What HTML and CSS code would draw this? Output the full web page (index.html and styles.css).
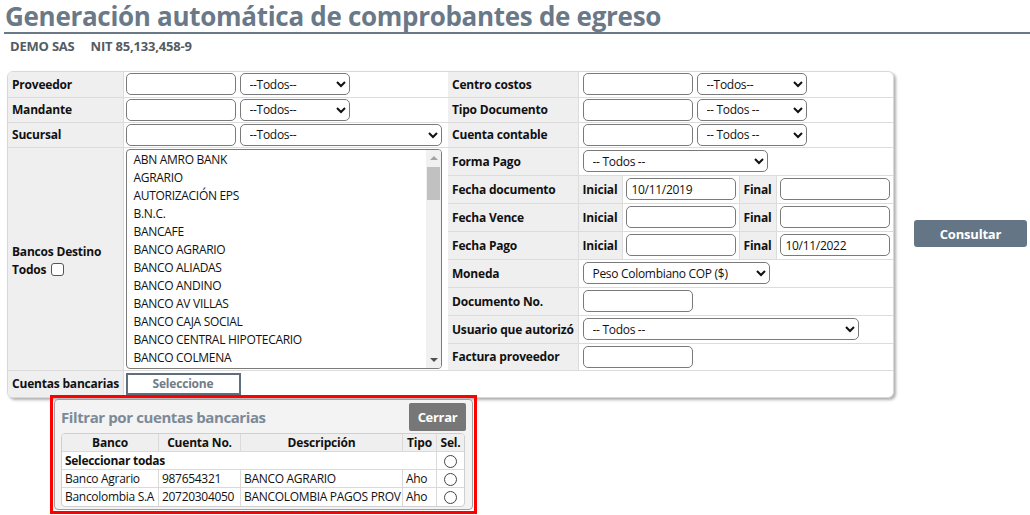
FILE: index.html
```html
<!DOCTYPE html>
<html lang="es">
<head>
<meta charset="utf-8">
<title>Generación automática de comprobantes de egreso</title>
<link rel="stylesheet" href="styles.css">
</head>
<body>
<h1 class="title">Generación automática de comprobantes de egreso</h1>
<div class="subtitle"><span>DEMO SAS</span><span class="nit">NIT 85,133,458-9</span></div>

<div class="main">
  <div class="panel">
    <table class="form left">
      <colgroup><col class="lc1"><col class="lc2"></colgroup>
      <tr class="r25">
        <th>Proveedor</th>
        <td><input class="txt" type="text"><select class="sel"><option>--Todos--</option></select></td>
      </tr>
      <tr class="r25">
        <th>Mandante</th>
        <td><input class="txt" type="text"><select class="sel"><option>--Todos--</option></select></td>
      </tr>
      <tr class="r25">
        <th>Sucursal</th>
        <td><input class="txt" type="text"><select class="sel wide"><option>--Todos--</option></select></td>
      </tr>
      <tr class="rbank">
        <th class="bankhead"><div>Bancos Destino</div><div class="todos">Todos <span class="chk"></span></div></th>
        <td>
          <div class="listbox">
            <div class="items">
              <div>ABN AMRO BANK</div>
              <div>AGRARIO</div>
              <div>AUTORIZACIÓN EPS</div>
              <div>B.N.C.</div>
              <div>BANCAFE</div>
              <div>BANCO AGRARIO</div>
              <div>BANCO ALIADAS</div>
              <div>BANCO ANDINO</div>
              <div>BANCO AV VILLAS</div>
              <div>BANCO CAJA SOCIAL</div>
              <div>BANCO CENTRAL HIPOTECARIO</div>
              <div>BANCO COLMENA</div>
            </div>
            <div class="sbar">
              <span class="arr up"></span>
              <span class="thumb"></span>
              <span class="arr down"></span>
            </div>
          </div>
        </td>
      </tr>
      <tr class="r27 last">
        <th>Cuentas bancarias</th>
        <td><button class="selbtn">Seleccione</button></td>
      </tr>
    </table>

    <table class="form right">
      <colgroup><col class="rc1"><col class="rc2"><col class="rc3"><col class="rc4"><col class="rc5"></colgroup>
      <tr class="r25">
        <th>Centro costos</th>
        <td colspan="4"><input class="txt" type="text"><select class="sel"><option>--Todos--</option></select></td>
      </tr>
      <tr class="r25">
        <th>Tipo Documento</th>
        <td colspan="4"><input class="txt" type="text"><select class="sel"><option>-- Todos --</option></select></td>
      </tr>
      <tr class="r25">
        <th>Cuenta contable</th>
        <td colspan="4"><input class="txt" type="text"><select class="sel"><option>-- Todos --</option></select></td>
      </tr>
      <tr class="r28">
        <th>Forma Pago</th>
        <td colspan="4"><select class="sel pago"><option>-- Todos --</option></select></td>
      </tr>
      <tr class="r28">
        <th>Fecha documento</th>
        <th class="sub">Inicial</th>
        <td class="dcell"><input class="txt" type="text" value="10/11/2019"></td>
        <th class="sub">Final</th>
        <td class="dcell"><input class="txt" type="text"></td>
      </tr>
      <tr class="r28">
        <th>Fecha Vence</th>
        <th class="sub">Inicial</th>
        <td class="dcell"><input class="txt" type="text"></td>
        <th class="sub">Final</th>
        <td class="dcell"><input class="txt" type="text"></td>
      </tr>
      <tr class="r28">
        <th>Fecha Pago</th>
        <th class="sub">Inicial</th>
        <td class="dcell"><input class="txt" type="text"></td>
        <th class="sub">Final</th>
        <td class="dcell"><input class="txt" type="text" value="10/11/2022"></td>
      </tr>
      <tr class="r28">
        <th>Moneda</th>
        <td colspan="4"><select class="sel moneda"><option>Peso Colombiano COP ($)</option></select></td>
      </tr>
      <tr class="r28">
        <th>Documento No.</th>
        <td colspan="4"><input class="txt" type="text"></td>
      </tr>
      <tr class="r28">
        <th>Usuario que autorizó</th>
        <td colspan="4"><select class="sel usuario"><option>-- Todos --</option></select></td>
      </tr>
      <tr class="r27">
        <th>Factura proveedor</th>
        <td colspan="4"><input class="txt" type="text"></td>
      </tr>
    </table>
  </div>
  <button class="consultar">Consultar</button>
</div>

<div class="popup">
  <div class="popin">
    <div class="pophead">
      <span class="poptitle">Filtrar por cuentas bancarias</span>
      <button class="cerrar">Cerrar</button>
    </div>
    <table class="cuentas">
      <tr>
        <th class="c1">Banco</th>
        <th class="c2">Cuenta No.</th>
        <th class="c3">Descripción</th>
        <th class="c4">Tipo</th>
        <th class="c5">Sel.</th>
      </tr>
      <tr>
        <td colspan="4" class="todas">Seleccionar todas</td>
        <td class="rc"><span class="radio"></span></td>
      </tr>
      <tr>
        <td>Banco Agrario</td>
        <td>987654321</td>
        <td>BANCO AGRARIO</td>
        <td>Aho</td>
        <td class="rc"><span class="radio"></span></td>
      </tr>
      <tr>
        <td>Bancolombia S.A</td>
        <td>20720304050</td>
        <td>BANCOLOMBIA PAGOS PROV</td>
        <td>Aho</td>
        <td class="rc"><span class="radio"></span></td>
      </tr>
    </table>
  </div>
</div>
</body>
</html>
```

FILE: styles.css
```css
* { box-sizing: border-box; }

body {
  margin: 0;
  font-family: "Open Sans", "Liberation Sans", sans-serif;
  font-size: 12px;
  letter-spacing: -0.3px;
  color: #111;
  background: #fff;
}

.title {
  margin: 0 0 0 4px;
  padding: 0 0 0 1px;
  font-size: 26px;
  font-weight: 700;
  line-height: 32px;
  color: #6a7988;
  border-bottom: 2px solid #6a7988;
  letter-spacing: -0.3px;
}

.subtitle {
  padding: 3px 0 0 10px;
  height: 37px;
  font-size: 13px;
  font-weight: 700;
  color: #555b62;
  letter-spacing: -0.2px;
}

.subtitle .nit { margin-left: 16px; }

.main {
  display: flex;
  align-items: center;
  padding-left: 7px;
}

.panel {
  display: flex;
  align-items: flex-start;
  width: 887px;
  border: 1px solid #d8d8d8;
  border-radius: 6px;
  box-shadow: 2px 2px 3px #b0b0b0;
  background: #fff;
  overflow: hidden;
}

.form {
  border-collapse: collapse;
  table-layout: fixed;
}

.form th, .form td {
  padding: 0 0 0 2px;
  border-bottom: 1px solid #dcdcdc;
  vertical-align: middle;
  white-space: nowrap;
}

.form th {
  background: #efefef;
  text-align: left;
  font-weight: 700;
  padding-left: 4px;
  border-right: 1px solid #dcdcdc;
  letter-spacing: -0.2px;
}

.form .last th, .form .last td { border-bottom: none; }

.left { width: 440px; }
.lc1 { width: 115px; }
.lc2 { width: 325px; }

.right { width: 445px; }
.rc1 { width: 130px; }
.rc2 { width: 44px; }
.rc3 { width: 117px; }
.rc4 { width: 37px; }
.rc5 { width: 117px; }

.right td { padding-left: 4px; }

.r25 { height: 25px; }
.r27 { height: 27px; }
.r28 { height: 28px; }
.rbank { height: 223px; }

.bankhead div { line-height: 18px; }
.bankhead { padding-top: 4px !important; }
.todos { display: flex; align-items: center; gap: 5px; }
.chk {
  display: inline-block;
  width: 13px;
  height: 13px;
  border: 1px solid #555;
  border-radius: 3px;
  background: #fff;
}

.txt, .sel {
  height: 22px;
  border: 1px solid #7a7a7a;
  border-radius: 5px;
  font-family: inherit;
  font-size: 12px;
  letter-spacing: -0.3px;
  color: #111;
  background: #fff;
  vertical-align: middle;
  margin: 0;
}

.txt { width: 110px; padding: 0 5px; }
.sel { width: 110px; margin-left: 4px; padding: 0 2px 0 5px; }
.sel.wide { width: 202px; }
.sel.pago { width: 185px; margin-left: 0; }
.sel.moneda { width: 187px; margin-left: 0; }
.sel.usuario { width: 276px; margin-left: 0; }

.form th.sub {
  padding-left: 4px;
  border-left: 1px solid #dcdcdc;
}
.form td.dcell { padding-left: 3px; padding-right: 0; }

.listbox {
  display: flex;
  width: 316px;
  height: 220px;
  border: 1px solid #7a7a7a;
  border-radius: 4px;
  overflow: hidden;
  background: #fff;
}

.items {
  flex: 1;
  padding: 1px 0 0 7px;
}

.items div {
  height: 18px;
  line-height: 18px;
  color: #111;
}

.sbar {
  width: 15px;
  background: #f1f1f1;
  display: flex;
  flex-direction: column;
  align-items: center;
}

.arr {
  width: 15px;
  height: 17px;
  position: relative;
}
.arr::after {
  content: "";
  position: absolute;
  left: 4px;
  border-left: 4px solid transparent;
  border-right: 4px solid transparent;
}
.arr.up::after { top: 6px; border-bottom: 4px solid #a3a3a3; }
.arr.down::after { top: 7px; border-top: 4px solid #505050; }

.thumb {
  width: 13px;
  height: 33px;
  background: #c1c1c1;
}
.sbar .down { margin-top: auto; }

.selbtn {
  width: 115px;
  height: 22px;
  margin: 0;
  border: 2px solid #5f6f7e;
  background: #fff;
  color: #717c86;
  font-family: inherit;
  font-size: 12px;
  font-weight: 700;
  letter-spacing: -0.2px;
  padding: 0;
}

.consultar {
  margin-left: 20px;
  margin-top: -2px;
  width: 113px;
  height: 27px;
  border: none;
  border-radius: 3px;
  background: #647686;
  color: #fff;
  font-family: inherit;
  font-size: 13px;
  font-weight: 700;
  letter-spacing: -0.2px;
  padding: 0;
}

.popup {
  margin: -3px 0 0 50px;
  width: 427px;
  height: 119px;
  border: 3px solid #ff0000;
  padding: 1px;
  position: relative;
}

.popin {
  height: 100%;
  border: 1px solid #a0a0a0;
  border-radius: 4px;
  background: #f3f3f3;
  padding: 3px 6px 0 6px;
}

.pophead {
  display: flex;
  align-items: center;
  justify-content: space-between;
  height: 28px;
}

.poptitle {
  font-size: 15px;
  font-weight: 700;
  color: #7c8a97;
  letter-spacing: -0.4px;
}

.cerrar {
  width: 57px;
  height: 28px;
  border: none;
  border-radius: 2px;
  background: #777;
  color: #fff;
  font-family: inherit;
  font-size: 13px;
  font-weight: 700;
  letter-spacing: -0.3px;
  padding: 0;
}

.cuentas {
  margin-top: 2px;
  width: 404px;
  table-layout: fixed;
  border-collapse: separate;
  border-spacing: 0;
  border: 1px solid #cfcfcf;
  border-radius: 4px;
  background: #fff;
  overflow: hidden;
}

.cuentas th, .cuentas td {
  height: 18px;
  padding: 0 3px;
  font-size: 12px;
  border-right: 1px solid #dadada;
  border-bottom: 1px solid #dadada;
  white-space: nowrap;
  overflow: hidden;
  line-height: 16px;
}
.cuentas tr > :last-child { border-right: none; }
.cuentas tr:last-child td { border-bottom: none; }

.cuentas th {
  background: #efefef;
  font-weight: 700;
  text-align: center;
  letter-spacing: -0.2px;
}

.c1 { width: 97px; }
.c2 { width: 82px; }
.c3 { width: 162px; }
.c4 { width: 34px; }
.c5 { width: 27px; }

.todas { font-weight: 700; }
.rc { text-align: center; }
.cuentas td.rc { padding: 0; }

.radio {
  display: inline-block;
  width: 13px;
  height: 13px;
  border: 1px solid #444;
  border-radius: 50%;
  vertical-align: middle;
  background: #fff;
}
```
